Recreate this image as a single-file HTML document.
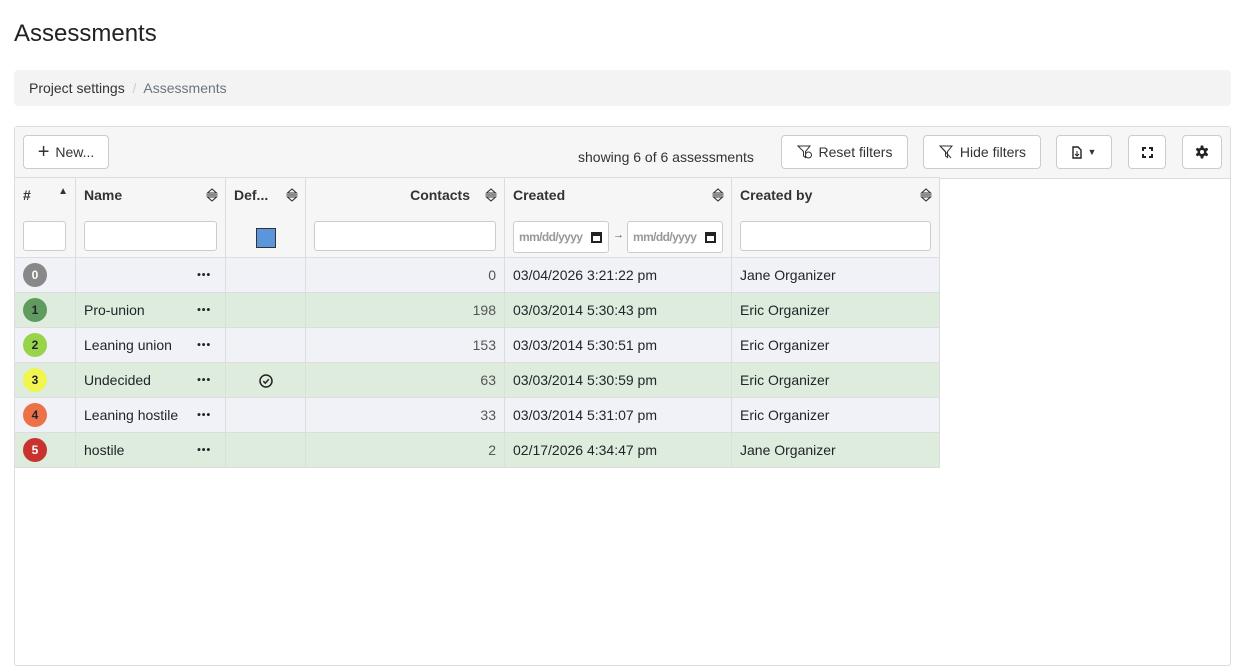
<!DOCTYPE html>
<html><head><style>
*{box-sizing:border-box}
body{margin:0;width:1245px;height:650px;overflow:hidden;background:#fff;font-family:"Liberation Sans",sans-serif;color:#212529;font-size:14px}
h1{position:absolute;left:14px;top:20px;margin:0;font-size:24px;font-weight:400;color:#222}
.bc{position:absolute;left:14px;top:70px;width:1217px;height:36px;background:#f3f3f3;border-radius:4px;padding:10px 15px;font-size:14px;color:#333}
.bc span{color:#6c757d}
.wrap{position:absolute;left:14px;top:126px;width:1217px;height:540px;border:1px solid #ddd;border-radius:3px}
.tb{height:52px;background:#f6f6f6;border-bottom:1px solid #ddd;position:relative}
.btn{position:absolute;top:8px;height:34px;border:1px solid #ccc;border-radius:4px;background:#fff;font-size:14px;display:flex;align-items:center;justify-content:center;gap:6px;color:#333}
table{border-collapse:collapse;position:absolute;left:-1px;top:50px;table-layout:fixed}
td,th{border:1px solid #ddd;padding:0 8px;font-size:14px}
th{background:#f6f6f6;height:80px;vertical-align:top;text-align:left;position:relative;color:#333}
th .t{position:absolute;top:9px;left:8px;font-weight:700}
th .s{position:absolute;top:10px;right:7px}
th input{position:absolute;top:43px;height:30px;border:1px solid #ccc;border-radius:3px;background:#fff}
td{height:35px;position:relative}
tr.a td{background:#f0f2f7}
tr.b td{background:#deecde}
.bd{display:inline-block;width:24px;height:24px;border-radius:50%;text-align:center;line-height:24px;font-size:12px;font-weight:700;vertical-align:middle}
.dots{position:absolute;right:14px;top:50%;transform:translateY(-50%);font-size:7px;line-height:7px;letter-spacing:0.5px}
.r{text-align:right;color:#555}
.d{position:absolute;top:43px;width:96px;height:32px;border:1px solid #ccc;border-radius:3px;background:#fff;font-size:12px;color:#999;padding:8px 5px;letter-spacing:-0.6px}
.d b{position:absolute;right:6px;top:10px;width:11px;height:11px;border:2px solid #222;border-top-width:4px}
</style></head><body>
<svg width="0" height="0" style="position:absolute"><defs><g id="srt"><path d="M1.5 5L6 1L10.5 5Z" fill="none" stroke="#333" stroke-width="1.1"/><path d="M0.5 7H11.5" stroke="#333" stroke-width="1.1"/><path d="M1.5 9L6 13L10.5 9Z" fill="none" stroke="#333" stroke-width="1.1"/></g></defs></svg>
<h1>Assessments</h1>
<div class="bc">Project settings &nbsp;<span style="color:#ccc">/</span>&nbsp; <span>Assessments</span></div>
<div class="wrap">
<div class="tb">
<div class="btn" style="left:8px;width:86px"><span style="font-size:20px;font-weight:300">+</span>New...</div>
<div style="position:absolute;left:563px;top:22px;font-size:14px;color:#333">showing 6 of 6 assessments</div>
<div class="btn" style="left:766px;width:127px"><svg width="16" height="14" viewBox="0 0 16 14"><path d="M1 1h12l-4.5 5.5v6l-2-1.5v-4.5z" fill="none" stroke="#333"/><circle cx="11.5" cy="10" r="3" fill="#fff" stroke="#333"/></svg>Reset filters</div>
<div class="btn" style="left:908px;width:118px"><svg width="16" height="14" viewBox="0 0 16 14"><path d="M2 1h12l-4.5 5.5v6l-2-1.5v-4.5zM2 1l11 12" fill="none" stroke="#333"/></svg>Hide filters</div>
<div class="btn" style="left:1041px;width:56px"><svg width="10" height="13"><path d="M1 1h5l3 3v8H1z" fill="none" stroke="#222" stroke-width="1.4"/><path d="M5 5v5M3 8l2 2 2-2" stroke="#222" fill="none"/></svg><span style="font-size:9px">▼</span></div>
<div class="btn" style="left:1113px;width:38px"><svg width="11" height="11"><path d="M1 4V1h3M7 1h3v3M10 7v3H7M4 10H1V7" fill="none" stroke="#222" stroke-width="2"/></svg></div>
<div class="btn" style="left:1167px;width:40px"><svg width="14" height="14" viewBox="0 0 14 14"><g fill="#222"><circle cx="7" cy="7" r="4.6"/><rect x="5.6" y="0.5" width="2.8" height="13" rx="0.6"/><rect x="5.6" y="0.5" width="2.8" height="13" rx="0.6" transform="rotate(60 7 7)"/><rect x="5.6" y="0.5" width="2.8" height="13" rx="0.6" transform="rotate(120 7 7)"/></g><circle cx="7" cy="7" r="2" fill="#fff"/></svg></div>
</div>
<table>
<colgroup><col style="width:61px"><col style="width:150px"><col style="width:80px"><col style="width:199px"><col style="width:227px"><col style="width:208px"></colgroup>
<tr>
<th><span class="t">#</span><span class="s" style="font-size:10px;top:8px">▲</span><input style="left:8px;width:43px"></th>
<th><span class="t">Name</span><svg class="s" width="12" height="14"><use href="#srt"/></svg><input style="left:8px;width:133px"></th>
<th><span class="t">Def...</span><svg class="s" width="12" height="14"><use href="#srt"/></svg><div style="position:absolute;left:30px;top:50px;width:20px;height:20px;background:#5b95dc;border:1px solid #333"></div></th>
<th><span class="t" style="left:auto;right:34px">Contacts</span><svg class="s" width="12" height="14"><use href="#srt"/></svg><input style="left:8px;width:182px"></th>
<th><span class="t">Created</span><svg class="s" width="12" height="14"><use href="#srt"/></svg><div class="d" style="left:8px">mm/dd/yyyy<b></b></div><span style="position:absolute;left:108px;top:51px;font-size:11px;color:#555">→</span><div class="d" style="left:122px">mm/dd/yyyy<b></b></div></th>
<th><span class="t">Created by</span><svg class="s" width="12" height="14"><use href="#srt"/></svg><input style="left:8px;width:191px"></th>
</tr>
<tr class="a"><td><span class="bd" style="background:#888;color:#fff">0</span></td><td><span class="dots">●●●</span></td><td></td><td class="r">0</td><td>03/04/2026 3:21:22 pm</td><td>Jane Organizer</td></tr>
<tr class="b"><td><span class="bd" style="background:#5f9a5f">1</span></td><td>Pro-union<span class="dots">●●●</span></td><td></td><td class="r">198</td><td>03/03/2014 5:30:43 pm</td><td>Eric Organizer</td></tr>
<tr class="a"><td><span class="bd" style="background:#98d44a">2</span></td><td>Leaning union<span class="dots">●●●</span></td><td></td><td class="r">153</td><td>03/03/2014 5:30:51 pm</td><td>Eric Organizer</td></tr>
<tr class="b"><td><span class="bd" style="background:#f0f550">3</span></td><td>Undecided<span class="dots">●●●</span></td><td style="text-align:center"><svg width="14" height="14" viewBox="0 0 14 14" style="vertical-align:middle"><circle cx="7" cy="7" r="6" fill="none" stroke="#222" stroke-width="1.5"/><path d="M4.3 7.2l2 2 3.5-4" fill="none" stroke="#222" stroke-width="1.5"/></svg></td><td class="r">63</td><td>03/03/2014 5:30:59 pm</td><td>Eric Organizer</td></tr>
<tr class="a"><td><span class="bd" style="background:#ec7148">4</span></td><td>Leaning hostile<span class="dots">●●●</span></td><td></td><td class="r">33</td><td>03/03/2014 5:31:07 pm</td><td>Eric Organizer</td></tr>
<tr class="b"><td><span class="bd" style="background:#c8332f;color:#fff">5</span></td><td>hostile<span class="dots">●●●</span></td><td></td><td class="r">2</td><td>02/17/2026 4:34:47 pm</td><td>Jane Organizer</td></tr>
</table>
</div>
</body></html>
